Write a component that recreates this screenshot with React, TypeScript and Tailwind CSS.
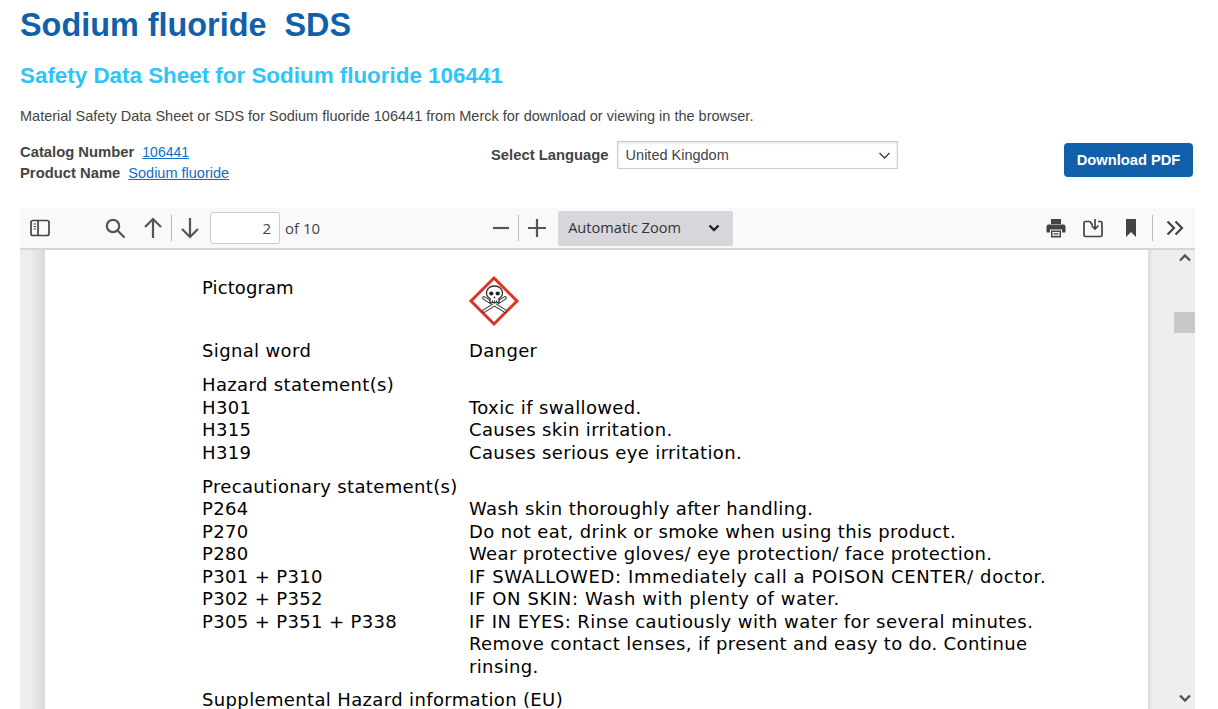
const rowsA = [
  ["H301", "Toxic if swallowed."],
  ["H315", "Causes skin irritation."],
  ["H319", "Causes serious eye irritation."],
];

const rowsB = [
  ["P264", "Wash skin thoroughly after handling.", ""],
  ["P270", "Do not eat, drink or smoke when using this product.", ""],
  ["P280", "Wear protective gloves/ eye protection/ face protection.", ""],
  ["P301 + P310", "IF SWALLOWED: Immediately call a POISON CENTER/ doctor.", "tracking-[0.62px]"],
  ["P302 + P352", "IF ON SKIN: Wash with plenty of water.", "tracking-[0.62px]"],
  ["P305 + P351 + P338", "IF IN EYES: Rinse cautiously with water for several minutes.", "tracking-[0.46px]"],
  ["", "Remove contact lenses, if present and easy to do. Continue", ""],
  ["", "rinsing.", ""],
];

function Row({ left, right, cls }: { left: string; right: string; cls?: string }) {
  return (
    <div className="flex">
      <div className="w-[267px] shrink-0">{left}</div>
      <div className={"w-[620px] " + (cls || "")}>{right}</div>
    </div>
  );
}

function Ghs() {
  return (
    <svg width="52" height="52" viewBox="0 0 52 52">
      <path d="M26 3 L49 26 L26 49 L3 26 Z" fill="#fff" stroke="#dc3322" strokeWidth="3" />
      <path d="M16 23 L37 36 M37 23 L16 36" stroke="#333" strokeWidth="3.6" strokeLinecap="round" />
      <path d="M16 23 L37 36 M37 23 L16 36" stroke="#fff" strokeWidth="1.6" strokeLinecap="round" />
      <path d="M26.5 11 C21 11 18.5 14.5 18.5 18 C18.5 21 20 22.5 22 23.5 V27.5 H31 V23.5 C33 22.5 34.5 21 34.5 18 C34.5 14.5 32 11 26.5 11 Z" fill="#fff" stroke="#333" strokeWidth="1.3" />
      <circle cx="23.3" cy="18.5" r="2.1" fill="#222" />
      <circle cx="29.7" cy="18.5" r="2.1" fill="#222" />
      <path d="M26.5 21 L25.3 23.3 H27.7 Z" fill="#333" />
      <path d="M24.5 25 V27.5 M26.5 25 V27.5 M28.5 25 V27.5" stroke="#333" strokeWidth="0.7" />
    </svg>
  );
}

export default function App() {
  return (
    <div className="h-[709px] overflow-hidden bg-white font-['Liberation_Sans',Arial,sans-serif] text-[#444]">
      <div className="pl-5 pr-[23px]">
        <h1 className="pt-[6px] text-[32.4px] leading-[38px] font-bold whitespace-pre text-[#1160ab]">Sodium fluoride  SDS</h1>
        <h2 className="mt-[18px] text-[22.4px] leading-[28px] font-bold text-[#2fc4f7]">Safety Data Sheet for Sodium fluoride 106441</h2>
        <p className="mt-[16px] text-[14.5px] leading-[20px] text-[#444]">
          Material Safety Data Sheet or SDS for Sodium fluoride 106441 from Merck for download or viewing in the browser.
        </p>

        <div className="mt-[15px] flex h-[67px] items-start text-[14.5px]">
          <div className="w-[471px] pt-[1px] leading-[21px]">
            <div>
              <b className="text-[14.8px]">Catalog Number</b> <a className="ml-1 text-sm text-[#0b6fc9] underline">106441</a>
            </div>
            <div>
              <b className="text-[14.8px]">Product Name</b> <a className="ml-1 text-[#0b6fc9] underline">Sodium fluoride</a>
            </div>
          </div>
          <div className="flex w-[573px] items-center">
            <b className="mr-2 text-[14.8px]">Select Language</b>
            <div className="flex h-[28px] w-[281px] items-center justify-between border border-[#ccc] pr-[6px] pl-2 shadow-[inset_0_1px_3px_rgba(0,0,0,0.12)]">
              <span className="pt-[2px]">United Kingdom</span>
              <svg width="13" height="13" viewBox="0 0 13 13" fill="none" stroke="#444" strokeWidth="1.5">
                <path d="M1.5 4 L6.5 9 L11.5 4" />
              </svg>
            </div>
          </div>
          <button className="mt-[2px] h-[34px] w-[129px] rounded bg-[#1160ab] pt-[1px] text-[14.7px] font-bold text-white">Download PDF</button>
        </div>

        <div className="flex h-[501px] flex-col">
          <div className="flex h-[42px] shrink-0 items-center border-b-2 border-[#d5d5d5] bg-[#f9f9fa] font-['Open_Sans',sans-serif] text-[15px] text-[#38383d]">
            <svg className="ml-[10px]" width="20" height="20" viewBox="0 0 20 20" fill="none" stroke="#444" strokeWidth="1.7">
              <rect x="1" y="2.5" width="18" height="15" rx="2" />
              <path d="M8 2.5 V17.5" />
              <path d="M3.5 6 H6 M3.5 8.5 H6 M3.5 11 H6" strokeWidth="1.1" />
            </svg>
            <svg className="ml-[54px]" width="22" height="22" viewBox="0 0 22 22" fill="none" stroke="#555" strokeWidth="2.2">
              <circle cx="9" cy="9" r="6.2" />
              <path d="M13.5 13.5 L20 20" strokeLinecap="round" />
            </svg>
            <svg className="ml-[17px]" width="20" height="22" viewBox="0 0 20 22" fill="none" stroke="#555" strokeWidth="2.2">
              <path d="M10 21 V2 M2 10 L10 2 L18 10" />
            </svg>
            <div className="ml-[8px] h-[26px] w-px bg-[#bbb]" />
            <svg className="ml-[8px]" width="20" height="22" viewBox="0 0 20 22" fill="none" stroke="#555" strokeWidth="2.2">
              <path d="M10 1 V20 M2 12 L10 20 L18 12" />
            </svg>
            <div className="ml-[10px] flex h-[32px] w-[70px] items-center justify-end rounded-[3px] border border-[#ccc] bg-white pr-2 text-[#444]">2</div>
            <span className="ml-[5px] text-[#444]">of 10</span>
            <svg className="ml-[172px]" width="18" height="18" viewBox="0 0 18 18" stroke="#555" strokeWidth="2.2">
              <path d="M1 9 H17" />
            </svg>
            <div className="ml-[8px] h-[26px] w-px bg-[#bbb]" />
            <svg className="ml-[9px]" width="18" height="18" viewBox="0 0 18 18" stroke="#555" strokeWidth="2.2">
              <path d="M0 9 H18 M9 0 V18" />
            </svg>
            <div className="ml-[12px] flex h-[35px] w-[175px] items-center justify-between rounded-[2px] bg-[#d7d7db] pr-[13px] pl-[10px] text-[14.6px] text-[#333]">
              <span>Automatic Zoom</span>
              <svg width="12" height="8" viewBox="0 0 12 8" fill="none" stroke="#222" strokeWidth="2.4">
                <path d="M1.5 1.5 L6 6 L10.5 1.5" />
              </svg>
            </div>
            <div className="ml-auto flex items-center">
              <svg width="20" height="20" viewBox="0 0 20 20" fill="#444">
                <path d="M5 1h10v5H5z" />
                <path d="M2.5 6.5h15A2 2 0 0 1 19.5 8.5v6h-3.5v-3H4v3H.5v-6a2 2 0 0 1 2-2z" />
                <path d="M5 12.5h10v7H5z" />
                <path d="M6.5 14h7v4h-7z" fill="#fff" />
                <path d="M7.5 15h5v.8h-5zM7.5 16.5h5v.8h-5z" />
              </svg>
              <svg className="ml-[17px]" width="20" height="20" viewBox="0 0 20 20" fill="none" stroke="#444" strokeWidth="1.7">
                <path d="M7 3.5 H2.5 A1.5 1.5 0 0 0 1 5 V17 A1.5 1.5 0 0 0 2.5 18.5 H17.5 A1.5 1.5 0 0 0 19 17 V5 A1.5 1.5 0 0 0 17.5 3.5 H15" />
                <path d="M7 3.5 L9 6.5 H10" />
                <path d="M12 1 V10 M8.5 7.5 L12 11 L15.5 7.5" />
              </svg>
              <svg className="ml-[22px]" width="12" height="20" viewBox="0 0 12 20" fill="#444">
                <path d="M1 1 H11 V19 L6 14 L1 19 Z" />
              </svg>
              <div className="ml-[15px] h-[26px] w-px bg-[#bbb]" />
              <svg className="ml-[13px] mr-[11px]" width="18" height="16" viewBox="0 0 18 16" fill="none" stroke="#444" strokeWidth="2.2">
                <path d="M1.5 1.5 L8 8 L1.5 14.5 M9.5 1.5 L16 8 L9.5 14.5" />
              </svg>
            </div>
          </div>

          <div className="flex min-h-0 flex-1 overflow-hidden bg-[#eeeeef]">
            <div className="w-[25px] shrink-0 bg-gradient-to-r from-[#eeeeef] from-[40%] to-[#d9d9db]" />
            <div className="w-[1103px] shrink-0 bg-white pt-[26px] pl-[157px] font-['DejaVu_Sans',sans-serif] text-[18px] leading-[22.5px] tracking-[0.02em] text-black">
              <div className="flex h-[62px]">
                <div className="w-[267px] leading-[24px] tracking-[0.1px]">Pictogram</div>
                <div className="-mt-[1px] -ml-[1px]">
                  <Ghs />
                </div>
              </div>
              <div className="pt-[1.5px]">
                <Row left="Signal word" right="Danger" />
              </div>
              <div className="mt-[12px]">Hazard statement(s)</div>
              {rowsA.map((r) => (
                <Row key={r[1]} left={r[0]} right={r[1]} />
              ))}
              <div className="mt-[11.5px]">Precautionary statement(s)</div>
              {rowsB.map((r) => (
                <Row key={r[1]} left={r[0]} right={r[1]} cls={r[2]} />
              ))}
              <div className="mt-[10.5px]">Supplemental Hazard information (EU)</div>
            </div>
            <div className="w-[5px] shrink-0 bg-gradient-to-r from-[#d9d9db] to-[#eeeeef]" />
            <div className="relative flex-1 bg-[#eeeeef]">
              <svg className="absolute top-[3px] left-[26px]" width="12" height="9" viewBox="0 0 12 9" fill="none" stroke="#555" strokeWidth="2.4">
                <path d="M1 7.5 L6 2.5 L11 7.5" />
              </svg>
              <div className="absolute top-[62px] left-[21px] h-[21px] w-[21px] bg-[#c8c8c8]" />
              <svg className="absolute bottom-[6px] left-[26px]" width="12" height="9" viewBox="0 0 12 9" fill="none" stroke="#555" strokeWidth="2.4">
                <path d="M1 1.5 L6 6.5 L11 1.5" />
              </svg>
            </div>
          </div>
        </div>
      </div>
    </div>
  );
}
